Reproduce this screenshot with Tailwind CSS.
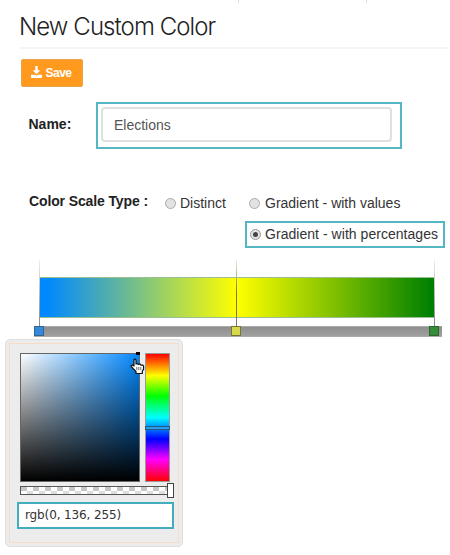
<!DOCTYPE html>
<html lang="en">
<head>
<meta charset="utf-8">
<title>New Custom Color</title>
<script src="https://cdn.jsdelivr.net/npm/@tailwindcss/browser@4"></script>
</head>
<body class="relative w-[450px] h-[555px] overflow-hidden bg-white text-[#333] font-['Liberation_Sans',Arial,sans-serif] text-[14px] leading-[18px]">
  <div class="absolute top-0 left-[238px] w-px h-[3px] bg-[#ddd]"></div>
  <div class="absolute top-0 left-[366px] w-px h-[3px] bg-[#ddd]"></div>

  <header class="ml-5 mr-[2px] h-[49px] border-b-2 border-[#f6f6f6] pt-[11px]">
    <h1 class="-ml-px w-max whitespace-nowrap font-['Inter','Liberation_Sans',sans-serif] font-light text-[24px] leading-[32px] tracking-[-0.92px] text-[#222]">New Custom Color</h1>
  </header>

  <button class="mt-[10px] ml-[20.5px] flex h-[28px] w-[62.5px] items-center rounded-[2px] border border-[#eba34d] bg-[#ff9a1f] pl-[9px] text-[12px] font-bold tracking-[-0.5px] text-white">
    <svg class="mr-[4px] mt-[-2px] shrink-0" width="11" height="12" viewBox="0 0 11 12" fill="#fff"><path d="M4.300 0h2.400v4.200h2.600L5.500 8.300 1.700 4.200h2.600zM0 8.800h4l1.500 1 1.500-1h4V12H0z"/></svg>
    <span class="leading-[14px]">Save</span>
  </button>

  <div class="mt-[15px] flex h-[47px]">
    <label class="ml-[28.5px] w-[67.500px] pt-[13px] font-bold text-[14px] text-[#222]">Name:</label>
    <div class="h-[47px] w-[306px] border-2 border-[#55b7c3] p-[3px]">
      <div class="flex h-[35px] w-[291px] items-center rounded-[4px] border-2 border-[#e0e0e0] pl-[11px] text-[14px] text-[#555]">Elections</div>
    </div>
  </div>

  <div class="mt-[43px] flex h-[29px]">
    <div class="ml-[29px] w-[136px] whitespace-nowrap font-bold tracking-[-0.12px] text-[#222]">Color Scale Type :</div>
    <label class="flex h-[23px] w-[84px] items-center gap-[4px]"><i class="size-[11px] shrink-0 rounded-full border border-[#aaa] bg-[#e2e2e2]"></i><span class="-mt-px">Distinct</span></label>
    <label class="flex h-[23px] items-center gap-[5px] whitespace-nowrap"><i class="size-[11px] shrink-0 rounded-full border border-[#aaa] bg-[#e2e2e2]"></i><span class="-mt-px">Gradient - with values</span></label>
  </div>
  <label class="ml-[245px] flex h-[27px] w-[200px] items-center gap-[4px] whitespace-nowrap border-2 border-[#55b7c3] pl-[3px]"><i class="flex size-[11px] shrink-0 items-center justify-center rounded-full border border-[#999] bg-[#e2e2e2]"><b class="size-[5px] rounded-full bg-[#444]"></b></i><span class="-mt-px tracking-[0.04px]">Gradient - with percentages</span></label>

  <div class="relative mt-[29px] ml-[34px] h-[60px] w-[408px]">
    <div class="ml-[5px] h-[41px] w-[396px] border-y border-[#9bbf90] bg-[linear-gradient(to_right,#0088ff_2%,#ffff00_50%,#008000_99%)]"></div>
    <div class="mt-[8px] h-[11px] border-y border-[#aaa] bg-[linear-gradient(#8e8e8e,#a0a0a0)]"></div>
    <div class="absolute left-[5px] -top-[17px] h-[67px] w-px bg-linear-to-b from-[#eee] to-[#888]"></div>
    <div class="absolute left-[202px] -top-[17px] h-[67px] w-px bg-linear-to-b from-[#eee] via-[#77782a] to-[#777]"></div>
    <div class="absolute left-[400px] -top-[17px] h-[67px] w-px bg-linear-to-b from-[#eee] to-[#888]"></div>
    <div class="absolute left-0 top-[49px] size-[10px] border border-[#37648d] bg-[#3389dd]"></div>
    <div class="absolute left-[197px] top-[49px] size-[10px] border border-[#77763a] bg-[#d8d84a]"></div>
    <div class="absolute left-[395px] top-[49px] size-[10px] border border-[#2d672f] bg-[#368d38]"></div>
  </div>

  <section class="relative mt-[2px] ml-[5px] h-[208px] w-[178px] rounded-[5px] border border-[#e0dfdf] bg-[#ececec] p-[3px]">
    <div class="h-[200px] border border-[#f5ddca] pt-[9px]">
      <div class="ml-[10px] flex gap-[5px]">
        <div class="h-[129px] w-[120px] border border-[#666] bg-[linear-gradient(to_top,#000,transparent),linear-gradient(to_right,#fff,#0088ff)]"></div>
        <div class="h-[129px] w-[25px] border border-[#999] bg-[linear-gradient(#f00,#ff0_17%,#0f0_33%,#0ff_50%,#00f_67%,#f0f_83%,#f00)] pt-[72px]">
          <div class="-mx-px h-[4px] border border-[#245a80] bg-[#26a0ec]"></div>
        </div>
      </div>
      <div class="relative mt-[4px] ml-[10px] h-[9px] w-[151px] border border-[#555] bg-white">
        <div class="h-[4px] bg-[repeating-linear-gradient(to_right,#c6c6c6_0_6px,#fff_6px_12px)]"></div>
        <div class="h-[3px] bg-[repeating-linear-gradient(to_right,#fff_0_6px,#ddd_6px_12px)]"></div>
        <div class="absolute -top-[4px] left-[146px] h-[15px] w-[7px] border border-[#444] bg-white"></div>
      </div>
      <div class="mt-[7px] ml-[7px] flex h-[27px] w-[157px] items-center border-2 border-[#42adbd] bg-white pl-[6px] font-['DejaVu_Sans',sans-serif] text-[12px] tracking-[-0.12px] text-[#333]"><span class="-mt-[2px]">rgb(0, 136, 255)</span></div>
    </div>
    <div class="absolute left-[130px] top-[12px] h-[3px] w-[4px] bg-black"></div>
    <svg class="absolute left-[124px] top-[18px]" width="15" height="17" viewBox="0 0 15 17"><path d="M4 1.500Q5.200.5 6 2v4l1-.5 1.500 1 1.500-.5 1 1.200 1.600-.2 1 1.200v3l-1.300 2v2.300H6v-2L3.500 11 1 8.200Q1.300 6.800 3 7.300L4 8z" fill="#fff" stroke="#111" stroke-width="1.200" stroke-linejoin="round"/><path d="M6.800 9v3M8.800 9v3M10.800 9v3" stroke="#333" stroke-width=".7"/></svg>
  </section>
</body>
</html>
